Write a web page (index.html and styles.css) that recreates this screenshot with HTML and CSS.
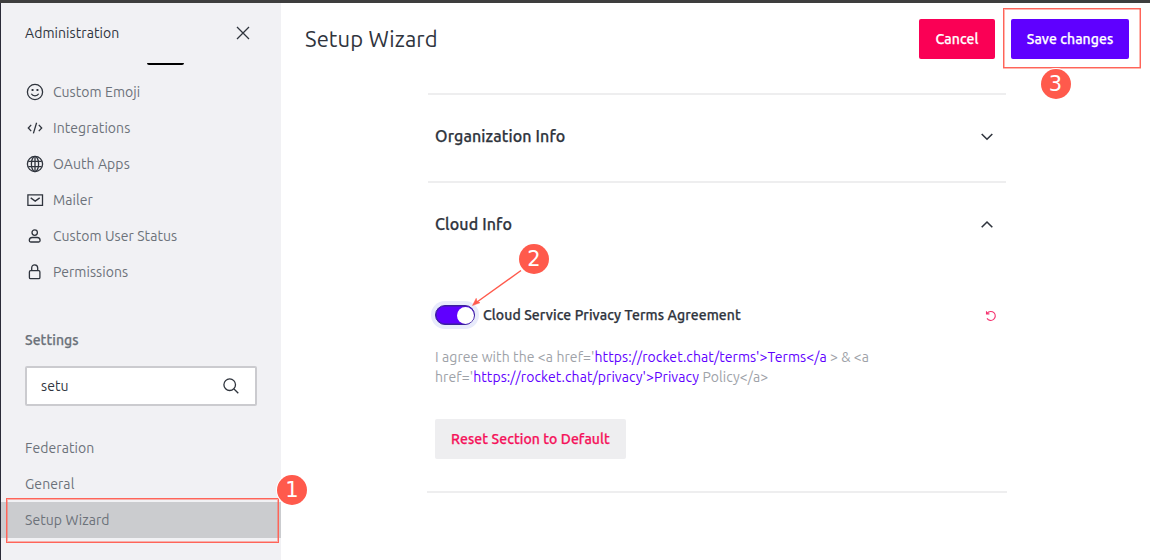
FILE: index.html
```html
<!DOCTYPE html>
<html lang="en">
<head>
<meta charset="utf-8">
<title>Setup Wizard</title>
<link rel="stylesheet" href="styles.css">
</head>
<body>
<div class="app">
  <aside class="sidebar">
    <header class="side-head">
      <span class="side-title">Administration</span>
      <svg class="close" width="14" height="14" viewBox="0 0 14 14"><path d="M1 1l12 12M13 1L1 13"/></svg>
    </header>
    <div class="scroll-mark"></div>
    <nav class="nav">
      <a class="item"><svg class="icon" viewBox="0 0 20 20"><circle cx="10" cy="10" r="7.6"/><path d="M6.3 11.8c.8 1.4 2.100 2 3.700 2s2.900-.6 3.700-2"/><path class="solid" d="M6.600 7h1.900v1.900H6.600zM11.500 7h1.900v1.900h-1.900z"/></svg><span>Custom Emoji</span></a>
      <a class="item"><svg class="icon" viewBox="0 0 20 20"><path d="M6.200 6.900L3.300 10l2.900 3.100M13.800 6.900l2.900 3.100-2.900 3.100M11.600 4.700L8.400 15.400"/></svg><span>Integrations</span></a>
      <a class="item"><svg class="icon" viewBox="0 0 20 20"><circle cx="10" cy="10" r="7.600"/><ellipse cx="10" cy="10" rx="3.600" ry="7.600"/><path d="M3.300 7.400h13.400M3.300 12.600h13.400M10 2.400v15.200" /></svg><span>OAuth Apps</span></a>
      <a class="item"><svg class="icon" viewBox="0 0 20 20"><path d="M2.900 4.900h14.600v10.500H2.900zM5.700 7.900l4.500 3.200 4.500-3.200"/></svg><span>Mailer</span></a>
      <a class="item"><svg class="icon" viewBox="0 0 20 20"><circle cx="9.700" cy="6.600" r="2.700"/><path d="M7.200 11.500h5c1.700 0 2.900 1.300 2.900 3 0 1-.6 1.500-1.400 1.500H5.700c-.8 0-1.400-.5-1.400-1.500 0-1.700 1.200-3 2.900-3z"/></svg><span>Custom User Status</span></a>
      <a class="item"><svg class="icon" viewBox="0 0 20 20"><rect x="4.400" y="8.700" width="10.500" height="8" rx="1.200"/><path d="M6.700 8.700V6c0-2 1.200-3.200 3-3.200s3 1.200 3 3.200v2.700"/></svg><span>Permissions</span></a>
    </nav>
    <h2 class="group"><span>Settings</span></h2>
    <div class="search"><span>setu</span><svg width="16" height="16" viewBox="0 0 16 16"><circle cx="6.700" cy="6.700" r="5.800"/><path d="M11 11l4.300 4.300"/></svg></div>
    <nav class="nav settings">
      <a class="item"><span>Federation</span></a>
      <a class="item"><span>General</span></a>
      <a class="item active"><span>Setup Wizard</span></a>
    </nav>
  </aside>
  <main class="main">
    <header class="page-head">
      <h1>Setup Wizard</h1>
      <button class="btn danger"><span>Cancel</span></button>
      <button class="btn primary"><span>Save changes</span></button>
    </header>
    <div class="content">
      <section class="section">
        <header class="section-head"><h3>Organization Info</h3><svg class="chevron" width="14" height="9" viewBox="0 0 14 9"><path d="M1.700 2l5.300 5.200L12.300 2"/></svg></header>
      </section>
      <section class="section">
        <header class="section-head"><h3>Cloud Info</h3><svg class="chevron" width="14" height="9" viewBox="0 0 14 9"><path d="M1.700 7.200L7 2l5.300 5.200"/></svg></header>
        <div class="field">
          <span class="toggle"><i></i></span>
          <label>Cloud Service Privacy Terms Agreement</label>
          <svg class="undo" width="12" height="12" viewBox="0 0 12 12"><path d="M2.200 3.200A4.500 4.500 0 1 1 2 8.400M1.500 1.200v2.700h2.900"/></svg>
        </div>
        <p class="hint"><span>I agree with the &lt;a href='<a>https://rocket.chat/terms'&gt;Terms&lt;/a</a> &gt; &amp; &lt;a</span><br><span>href='<a>https://rocket.chat/privacy'&gt;Privacy</a> Policy&lt;/a&gt;</span></p>
        <button class="btn reset"><span>Reset Section to Default</span></button>
      </section>
    </div>
  </main>
</div>
<div class="frame frame-item"></div>
<div class="frame frame-save"></div>
<svg class="arrow" width="56" height="44" viewBox="0 0 56 44"><path d="M52 4.500L8 36"/><path class="head" d="M3.500 39.500l3.700-7.200.8 3 3 1.400z"/></svg>
<span class="badge one">1</span>
<span class="badge two">2</span>
<span class="badge three">3</span>
</body>
</html>
```
FILE: styles.css
```css
* { box-sizing: border-box; }
body { margin: 0; width: 1150px; height: 560px; overflow: hidden; position: relative; background: #fff; color: #2f343d; font: 14px/20px Ubuntu, "Noto Sans", sans-serif; letter-spacing: .07px; border-top: 3px solid #3e3e3e; }
span, h1, h3, label { white-space: nowrap; }
svg { fill: none; stroke: #2f343d; stroke-width: 1.300; flex: none; }
.app { display: flex; height: 557px; border-left: 1px solid #2b2b38; }
.sidebar { width: 280px; background: #f1f1f4; }
.side-head { height: 60px; padding: 0 31px 0 24px; display: flex; align-items: center; justify-content: space-between; }
.scroll-mark { width: 37px; height: 2px; margin-left: 146px; background: #000; border-radius: 0 0 2px 2px; }
.nav { padding-top: 9px; }
.item { display: flex; align-items: center; gap: 8px; height: 36px; padding-left: 24px; color: #6c727a; }
.icon { width: 20px; height: 20px; }
.solid { fill: #2f343d; stroke: none; }
.group { margin: 40px 0 16px 24px; font-size: 14px; line-height: 20px; font-weight: 500; color: #6c727a; }
.group, h3, label, .btn { -webkit-text-stroke: .25px currentColor; }
.search { width: 232px; height: 40px; margin-left: 24px; padding: 0 16px 0 14px; display: flex; align-items: center; justify-content: space-between; border: 2px solid #cbcbcf; border-radius: 2px; background: #fff; }
.settings { padding-top: 24px; }
.active { background: #cbcccf; }
.main { flex: 1; }
.page-head { height: 72px; padding: 0 21px 0 24px; display: flex; align-items: center; gap: 16px; }
h1 { margin: 0 auto 0 0; font-size: 22px; line-height: 32px; font-weight: 400; letter-spacing: .1px; }
.btn { height: 40px; padding: 0; border: 0; border-radius: 2px; font: 500 14px/20px Ubuntu, "Noto Sans", sans-serif; letter-spacing: .09px; color: #fff; }
.danger { width: 76px; background: #fa0055; }
.primary { width: 118px; background: #5f00ff; }
.content { width: 580px; margin: 18px 0 0 146px; border-bottom: 2px solid #eeeeef; height: 400px; }
.section { margin: 0 1px; padding: 0 7px; border-top: 2px solid #eeeeef; }
.section-head { height: 86px; padding: 0 5px 4px 0; display: flex; align-items: center; justify-content: space-between; }
h3 { margin: 0; font-size: 16px; line-height: 24px; font-weight: 500; letter-spacing: .13px; }
.chevron { stroke-width: 1.600; margin-top: 1px; }
.field { display: flex; align-items: center; height: 20px; margin-top: 36px; }
.toggle { width: 40px; height: 20px; border: 1px solid #3a209c; border-radius: 10px; background: #5f00ff; box-shadow: 0 0 0 4px #e8ebfb, inset 0 0 0 .5px #3a209c; display: flex; justify-content: flex-end; align-items: center; }
.toggle i { width: 17px; height: 17px; border-radius: 50%; background: #fff; }
label { margin-left: 8px; font-weight: 500; letter-spacing: .1px; }
.undo { margin: 2px 2px 0 auto; stroke: #f5326f; stroke-width: 1.100; }
.hint { margin: 22px 0 32px; color: #9ea2a8; letter-spacing: .085px; }
.hint a { color: #5f00ff; }
.reset { width: 191px; background: #eeeef0; color: #f5125b; }
.frame { position: absolute; border: 1px solid #ff6459; box-shadow: inset 0 0 0 1px #ff5a4c70; }
.frame-item { left: 6px; top: 495px; width: 273px; height: 45px; }
.frame-save { left: 1003px; top: 5px; width: 138px; height: 60px; box-shadow: inset 1px 1px #ff5a4c70, inset -1px 0 #ff5a4c70, 0 1px #ff5a4c70; }
.arrow { position: absolute; left: 469px; top: 263px; stroke: #ff5a4c; stroke-width: 1.400; }
.arrow .head { fill: #ff5a4c; stroke-width: .500; }
.badge { position: absolute; width: 30px; height: 30px; border-radius: 50%; background: #ff5a4c; color: #fff; font: 21px/30px "DejaVu Sans", sans-serif; letter-spacing: 0; text-align: center; }
.one { left: 277px; top: 472px; box-shadow: 0 0 0 1px #fff; }
.two { left: 519px; top: 241px; }
.three { left: 1040.5px; top: 66px; box-shadow: 0 0 0 1px #fff; }
```
